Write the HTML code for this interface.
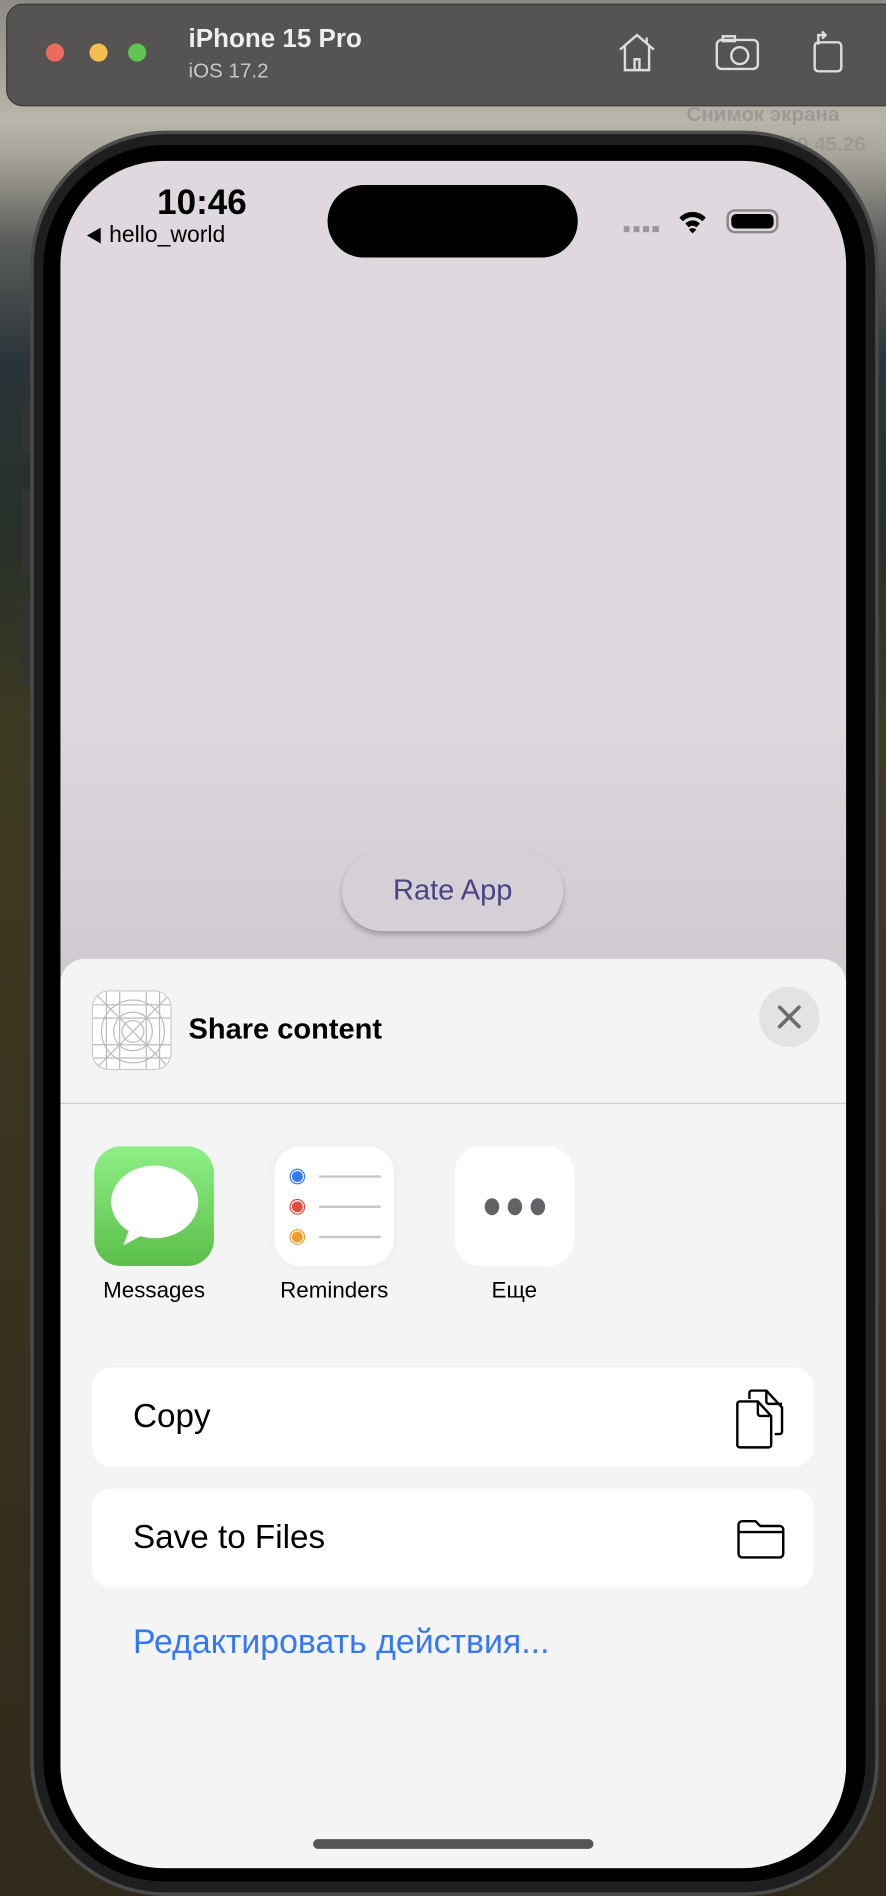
<!DOCTYPE html>
<html><head><meta charset="utf-8"><style>
*{margin:0;padding:0;box-sizing:border-box}
html,body{width:886px;height:1896px;overflow:hidden;background:#2a2a22}
#w{position:absolute;left:0;top:0;width:733px;height:1568px;transform:scale(1.20873,1.20918);transform-origin:0 0;font-family:"Liberation Sans","Noto Sans CJK SC",sans-serif;
background:linear-gradient(180deg,#8d8a84 0px,#b9b5aa 100px,#a7a398 130px,#5a5d5a 200px,#2a3338 300px,#283028 450px,#3d3a22 600px,#3a3520 900px,#2f2a1a 1568px)}
.a{position:absolute}
</style></head><body><div id="w">
<div class="a" style="left:5px;top:3px;width:740px;height:85px;background:#555453;border-radius:14px;border:1px solid #3a3a3a"></div>
<div class="a" style="left:38px;top:36px;width:15px;height:15px;border-radius:50%;background:#ec6a5e"></div>
<div class="a" style="left:74px;top:36px;width:15px;height:15px;border-radius:50%;background:#f4bf4f"></div>
<div class="a" style="left:106px;top:36px;width:15px;height:15px;border-radius:50%;background:#61c554"></div>
<div class="a" style="left:156px;top:20px;color:#eee;font-size:21.5px;font-weight:bold">iPhone 15 Pro</div>
<div class="a" style="left:156px;top:49px;color:#c8c8c8;font-size:17px">iOS 17.2</div>
<svg class="a" style="left:508px;top:25px" width="220" height="40" fill="none" stroke="#ddd" stroke-width="2">
<path d="M5 16 L19 4 L33 16 M9 13 V33 H29 V13 M17 33 V24 H21 V33 M27 6 V11"/>
<rect x="85" y="8" width="34" height="24" rx="4"/><rect x="90" y="5" width="10" height="4"/><circle cx="104" cy="21" r="7"/>
<rect x="166" y="10" width="22" height="24" rx="3"/><path d="M169 12 V4 h6 M172 1 l3 3 -3 3"/>
</svg>
<div class="a" style="left:568px;top:85px;color:#9a9a98;font-size:17px;font-weight:bold">Снимок экрана</div>
<div class="a" style="left:650px;top:110px;color:#9a9a98;font-size:17px;font-weight:bold">10.45.26</div>
<div class="a" style="left:18px;top:335px;width:10px;height:38px;background:#333;border-radius:2px"></div>
<div class="a" style="left:18px;top:405px;width:10px;height:70px;background:#333;border-radius:2px"></div>
<div class="a" style="left:18px;top:497px;width:10px;height:70px;background:#333;border-radius:2px"></div>
<div class="a" style="left:25px;top:108px;width:702px;height:1460px;border-radius:112px;background:#1e1e1e;border:3px solid #4a4a4a"></div>
<div class="a" style="left:36px;top:120px;width:680px;height:1436px;border-radius:100px;background:#000"></div>
<div class="a" style="left:50px;top:133px;width:650px;height:1412px;border-radius:86px;overflow:hidden;background:linear-gradient(180deg,#dfd9df 0,#ded9de 450px,#d0cbd0 660px)">
 <div class="a" style="left:80px;top:19px;font-size:29px;font-weight:bold;color:#000">10:46</div>
 <div class="a" style="left:21px;top:51px;font-size:19px;color:#000"><span style="font-size:14px">◀</span> hello_world</div>
 <div class="a" style="left:221px;top:20px;width:207px;height:60px;border-radius:30px;background:#000"></div>
 <div class="a" style="left:466px;top:54px;width:32px;height:5px;background:repeating-linear-gradient(90deg,#9a979a 0 5px,transparent 5px 8px)"></div>
 <svg class="a" style="left:510px;top:39px" width="26" height="22"><path d="M2 8 A15 15 0 0 1 24 8 L21 11 A11 11 0 0 0 5 11Z M7 13 A8 8 0 0 1 19 13 L16 16 A4 4 0 0 0 10 16Z M13 21 L10 18 A4 4 0 0 1 16 18Z" fill="#000"/></svg>
 <div class="a" style="left:551px;top:40px;width:43px;height:20px;border:2px solid #888;border-radius:7px;padding:2px"><div style="width:100%;height:100%;background:#000;border-radius:4px"></div></div>
 <div class="a" style="left:233px;top:571px;width:183px;height:66px;border-radius:33px;background:#d4d0d6;box-shadow:0 3px 5px rgba(0,0,0,.25);color:#4b4286;font-size:24px;text-align:center;line-height:66px">Rate App</div>
 <div class="a" style="left:0;top:660px;width:650px;height:760px;background:#f4f4f4;border-radius:20px 20px 0 0">
  <div class="a" style="left:26px;top:26px;width:66px;height:66px;border-radius:14px;background:#fff;border:1px solid #ccc;overflow:hidden">
   <svg width="66" height="66" fill="none" stroke="#bbb" stroke-width="1"><circle cx="33" cy="33" r="26"/><circle cx="33" cy="33" r="16"/><circle cx="33" cy="33" r="9"/><path d="M0 0L66 66M66 0L0 66M11 0V66M55 0V66M0 11H66M0 55H66M22 0V66M44 0V66M0 22H66M0 44H66"/></svg>
  </div>
  <div class="a" style="left:106px;top:45px;font-size:24px;font-weight:bold;color:#000">Share content</div>
  <div class="a" style="left:578px;top:23px;width:50px;height:50px;border-radius:50%;background:#e3e3e4"></div>
  <svg class="a" style="left:592px;top:37px" width="22" height="22"><path d="M3 3L19 19M19 3L3 19" stroke="#6c6c70" stroke-width="3" stroke-linecap="round"/></svg>
  <div class="a" style="left:0;top:119px;width:650px;height:1px;background:#cfcfcf"></div>
  <div class="a" style="left:28px;top:155px;width:99px;height:99px;border-radius:22px;background:linear-gradient(#8ef085,#5bbf4a)"></div>
  <svg class="a" style="left:28px;top:155px" width="99" height="99"><ellipse cx="50" cy="46" rx="36" ry="30" fill="#fff"/><path d="M30 66 L24 82 L46 70Z" fill="#fff"/></svg>
  <div class="a" style="left:177px;top:155px;width:99px;height:99px;border-radius:22px;background:#fff;box-shadow:0 0 8px rgba(0,0,0,.04)"></div>
  <svg class="a" style="left:177px;top:155px" width="99" height="99"><circle cx="19" cy="25" r="6.5" fill="#3478f6"/><circle cx="19" cy="25" r="5" fill="none" stroke="#fff" stroke-width="1"/><circle cx="19" cy="50" r="6.5" fill="#e9493c"/><circle cx="19" cy="50" r="5" fill="none" stroke="#fff" stroke-width="1"/><circle cx="19" cy="75" r="6.5" fill="#f19a2f"/><circle cx="19" cy="75" r="5" fill="none" stroke="#fff" stroke-width="1"/><path d="M37 25H88M37 50H88M37 75H88" stroke="#c8c8c8" stroke-width="2"/></svg>
  <div class="a" style="left:326px;top:155px;width:99px;height:99px;border-radius:22px;background:#fff"></div>
  <svg class="a" style="left:326px;top:155px" width="99" height="99"><g fill="#636367"><ellipse cx="31" cy="50" rx="6" ry="7"/><ellipse cx="50" cy="50" rx="6" ry="7"/><ellipse cx="69" cy="50" rx="6" ry="7"/></g></svg>
  <div class="a" style="left:8px;top:263px;width:139px;text-align:center;font-size:18.5px;color:#000">Messages</div>
  <div class="a" style="left:157px;top:263px;width:139px;text-align:center;font-size:18.5px;color:#000">Reminders</div>
  <div class="a" style="left:306px;top:263px;width:139px;text-align:center;font-size:18.5px;color:#000">Еще</div>
  <div class="a" style="left:26px;top:338px;width:597px;height:82px;border-radius:16px;background:#fff"></div>
  <div class="a" style="left:60px;top:362px;font-size:27.5px;color:#000">Copy</div>
  <svg class="a" style="left:558px;top:356px" width="44" height="50" fill="none" stroke="#000" stroke-width="2"><path d="M12 8 V3 a2 2 0 0 1 2 -2 h12 l13 14 v20 a2 2 0 0 1 -2 2 h-4 M26 1 v9 a2 2 0 0 0 2 2 h11"/><path d="M4 10 h15 l11 12 v24 a2 2 0 0 1 -2 2 h-24 a2 2 0 0 1 -2 -2 v-34 a2 2 0 0 1 2 -2z M19 10 v10 a2 2 0 0 0 2 2 h9"/></svg>
  <div class="a" style="left:26px;top:438px;width:597px;height:82px;border-radius:16px;background:#fff"></div>
  <div class="a" style="left:60px;top:462px;font-size:27.5px;color:#000">Save to Files</div>
  <svg class="a" style="left:558px;top:462px" width="44" height="36" fill="none" stroke="#000" stroke-width="2"><path d="M3 6 a3 3 0 0 1 3 -3 h11 l4 4 h16 a3 3 0 0 1 3 3 v20 a3 3 0 0 1 -3 3 h-31 a3 3 0 0 1 -3 -3z M2 12 H40"/></svg>
  <div class="a" style="left:60px;top:549px;font-size:28px;color:#3478f6">Редактировать действия...</div>
 </div>
 <div class="a" style="left:209px;top:1388px;width:232px;height:8px;border-radius:4px;background:#555"></div>
</div>
</div></body></html>
